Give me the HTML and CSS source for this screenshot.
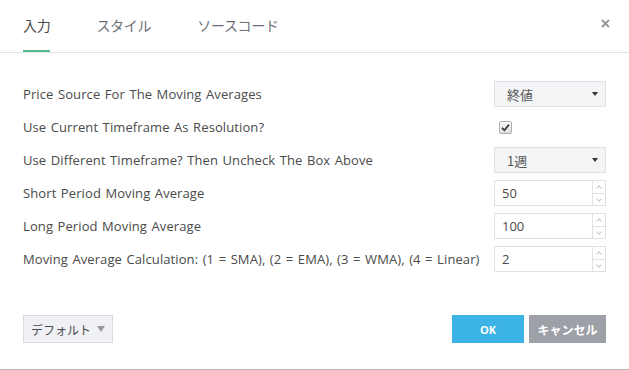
FILE: index.html
```html
<!DOCTYPE html>
<html lang="ja">
<head>
    <meta charset="UTF-8">
    <title>インジケーター設定</title>
    <link rel="stylesheet" href="styles.css">
</head>
<body>
    <div class="dialog">
        <div class="tabs">
            <span class="tab active">入力</span>
            <span class="tab">スタイル</span>
            <span class="tab">ソースコード</span>
            <span class="close">
                <svg width="9" height="9" viewBox="0 0 9 9"><path d="M1 1 L8 8 M8 1 L1 8" stroke="#999" stroke-width="2"/></svg>
            </span>
        </div>

        <div class="body">
            <div class="row">
                <span class="label">Price Source For The Moving Averages</span>
                <div class="select"><span>終値</span><i class="caret"></i></div>
            </div>
            <div class="row">
                <span class="label">Use Current Timeframe As Resolution?</span>
                <div class="control">
                    <span class="check">
                        <svg width="9" height="9" viewBox="0 0 9 9"><path d="M1 4.8 L3.4 7.2 L8 1.6" fill="none" stroke="#3a3a3a" stroke-width="1.8"/></svg>
                    </span>
                </div>
            </div>
            <div class="row">
                <span class="label">Use Different Timeframe? Then Uncheck The Box Above</span>
                <div class="select"><span>1週</span><i class="caret"></i></div>
            </div>
            <div class="row">
                <span class="label">Short Period Moving Average</span>
                <div class="number"><span class="value">50</span><span class="spin"><b></b><b></b></span></div>
            </div>
            <div class="row">
                <span class="label">Long Period Moving Average</span>
                <div class="number"><span class="value">100</span><span class="spin"><b></b><b></b></span></div>
            </div>
            <div class="row">
                <span class="label">Moving Average Calculation: (1 = SMA), (2 = EMA), (3 = WMA), (4 = Linear)</span>
                <div class="number"><span class="value">2</span><span class="spin"><b></b><b></b></span></div>
            </div>
        </div>

        <div class="footer">
            <button class="btn default">デフォルト <i class="down"></i></button>
            <div class="actions">
                <button class="btn ok">OK</button>
                <button class="btn cancel">キャンセル</button>
            </div>
        </div>
    </div>
</body>
</html>
```

FILE: styles.css
```css
body {
    margin: 0;
    font-family: "Open Sans", "Noto Sans CJK JP", sans-serif;
    color: #4a4a4a;
    background: #fff;
}

.dialog {
    width: 629px;
    height: 370px;
    border-bottom: 1px solid #b8b8b8;
    box-sizing: border-box;
}

.tabs {
    display: flex;
    align-items: flex-start;
    height: 52px;
    padding: 0 19px 0 23px;
    border-bottom: 1px solid #e0e3e8;
    font-family: "Noto Sans CJK JP", sans-serif;
    font-size: 14px;
}

.tab {
    height: 50px;
    line-height: 50px;
    margin-right: 46px;
    color: #6b6e78;
    border-bottom: 2px solid transparent;
    letter-spacing: -0.3px;
}

.tab.active {
    color: #4a4a4a;
    border-bottom-color: #53b987;
}

.close {
    margin-left: auto;
    margin-top: 19px;
    line-height: 0;
}

.body {
    display: flex;
    flex-direction: column;
    gap: 7px;
    padding: 28px 23px 0 23px;
}

.row {
    display: flex;
    align-items: center;
    justify-content: space-between;
    height: 26px;
    font-size: 13px;
}

.label {
    white-space: nowrap;
    letter-spacing: 0.1px;
    word-spacing: 1px;
}

.select, .number, .control {
    width: 112px;
    height: 26px;
    box-sizing: border-box;
}

.select {
    display: flex;
    align-items: center;
    padding: 0 7px 0 12px;
    background: #f3f4f6;
    border: 1px solid #dfe1e6;
    font-family: "Noto Sans CJK JP", sans-serif;
    font-size: 13px;
    color: #555;
}

.caret {
    margin-left: auto;
    width: 0;
    height: 0;
    border-left: 3px solid transparent;
    border-right: 3px solid transparent;
    border-top: 4px solid #333;
}

.control {
    display: flex;
    align-items: center;
    padding-left: 5px;
}

.check {
    display: flex;
    align-items: center;
    justify-content: center;
    width: 11px;
    height: 11px;
    border: 1px solid #b0b0b0;
    border-radius: 2px;
    background: linear-gradient(#fafafa, #dedede);
}

.number {
    display: flex;
    border: 1px solid #dfe1e6;
    background: #fff;
    font-size: 13px;
}

.value {
    flex: 1;
    padding-left: 7px;
    line-height: 24px;
}

.spin {
    display: flex;
    flex-direction: column;
    width: 12px;
    border-left: 1px solid #dfe1e6;
}

.spin b {
    flex: 1;
    position: relative;
}

.spin b + b {
    border-top: 1px solid #dfe1e6;
}

.spin b::after {
    content: "";
    position: absolute;
    left: 4px;
    top: 5px;
    width: 3px;
    height: 3px;
    border-left: 1px solid #c4c8d0;
    border-top: 1px solid #c4c8d0;
    transform: rotate(45deg);
}

.spin b + b::after {
    top: 3px;
    transform: rotate(225deg);
}

.footer {
    display: flex;
    justify-content: space-between;
    padding: 43px 23px 0 23px;
}

.actions {
    display: flex;
    gap: 5px;
}

.btn {
    height: 28px;
    border: none;
    font-family: "Noto Sans CJK JP", sans-serif;
    font-size: 12px;
    padding: 0;
    cursor: pointer;
}

.default {
    width: 90px;
    background: #f0f1f5;
    border: 1px solid #d9dce2;
    color: #4a4a4a;
    display: flex;
    align-items: center;
    justify-content: center;
    gap: 6px;
}

.down {
    width: 0;
    height: 0;
    border-left: 4px solid transparent;
    border-right: 4px solid transparent;
    border-top: 6px solid #999;
}

.ok {
    width: 72px;
    background: #3bb3e4;
    color: #fff;
    font-weight: bold;
    font-family: "Open Sans", sans-serif;
    font-size: 11px;
}

.cancel {
    width: 77px;
    background: #9ea0a7;
    color: #fff;
    font-weight: bold;
}
```
